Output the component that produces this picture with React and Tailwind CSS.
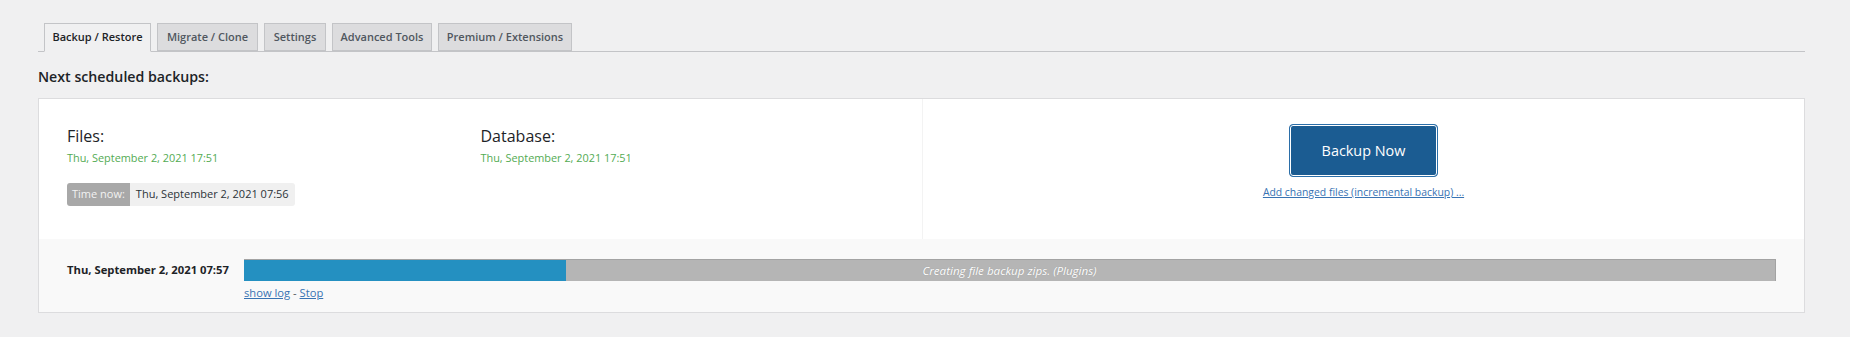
export default function App() {
  const tabs = [
    { label: "Backup / Restore", w: "w-[107px]", active: true },
    { label: "Migrate / Clone", w: "w-[101px]" },
    { label: "Settings", w: "w-[62px]" },
    { label: "Advanced Tools", w: "w-[100px]" },
    { label: "Premium / Extensions", w: "w-[134px]" },
  ];
  return (
    <div className="w-[1850px] h-[337px] bg-[#f0f0f1] pl-[38px] pr-[45px] pt-[23px] font-['Open_Sans',sans-serif] text-[#1d2327] overflow-hidden">
      <div className="flex gap-[6px] pl-[6px] border-b border-[#c3c4c7] h-[29px]">
        {tabs.map((t) => (
          <div
            key={t.label}
            className={
              t.active
                ? `${t.w} h-[29px] flex items-center justify-center border border-[#c3c4c7] border-b-[#f0f0f1] bg-[#f0f0f1] text-[11px] font-semibold text-[#1d2327]`
                : `${t.w} h-[28px] flex items-center justify-center border border-[#c3c4c7] bg-[#dcdcde] text-[11px] font-semibold text-[#50575e]`
            }
          >
            {t.label}
          </div>
        ))}
      </div>
      <h3 className="mt-[14px] mb-[11px] h-[21px] leading-[21px] text-[14.2px] font-semibold text-[#1d2327]">
        Next scheduled backups:
      </h3>
      <div className="border border-[#dcdcde] bg-white">
        <div className="flex h-[140px]">
          <div className="w-[883px] grid grid-cols-2 px-[28px] pt-[27px]">
            <div>
              <div className="text-[16px] leading-[20px] text-[#1d2327]">Files:</div>
              <div className="mt-[5px] text-[10.9px] leading-[14px] text-[#53ab53]">Thu, September 2, 2021 17:51</div>
              <div className="mt-[18px] inline-flex h-[23px] rounded-[3px] overflow-hidden text-[11px]">
                <span className="bg-[#a8a8a8] text-[#f2f2f2] px-[5px] flex items-center">Time now:</span>
                <span className="bg-[#f0f0f0] text-[#2c3338] px-[6px] flex items-center">Thu, September 2, 2021 07:56</span>
              </div>
            </div>
            <div>
              <div className="text-[16px] leading-[20px] text-[#1d2327]">Database:</div>
              <div className="mt-[5px] text-[10.9px] leading-[14px] text-[#53ab53]">Thu, September 2, 2021 17:51</div>
            </div>
          </div>
          <div className="flex-1 border-l border-[#f3f3f3] flex flex-col items-center pt-[25px]">
            <button className="w-[149px] h-[53px] rounded-[4px] bg-[#1b5c92] border border-[#2b6ea8] shadow-[inset_0_0_0_1px_#ffffff] text-white text-[14.4px]">
              Backup Now
            </button>
            <a href="#" className="mt-[8px] text-[10.4px] leading-[14px] text-[#3873b3] underline">
              Add changed files (incremental backup) ...
            </a>
          </div>
        </div>
        <div className="bg-[#f9f9f9] h-[73px] flex items-start px-[28px] pt-[20px]">
          <div className="w-[177px] text-[11.25px] leading-[22px] font-bold text-[#1d2327]">
            Thu, September 2, 2021 07:57
          </div>
          <div className="flex-1">
            <div className="relative h-[22px] bg-[#b5b5b5] border-t border-r border-[#a3a3a3]">
              <div className="h-full bg-[#2490c1] w-[21%]" />
              <div className="absolute inset-0 flex items-center justify-center text-[11.6px] italic text-white [text-shadow:0_0_1px_rgba(0,0,0,0.2)]">
                Creating file backup zips. (Plugins)
              </div>
            </div>
            <div className="mt-[5px] text-[11.2px] leading-[14px] text-[#50575e]">
              <a href="#" className="text-[#3873b3] underline">show log</a>
              {" - "}
              <a href="#" className="text-[#3873b3] underline">Stop</a>
            </div>
          </div>
        </div>
      </div>
    </div>
  );
}
